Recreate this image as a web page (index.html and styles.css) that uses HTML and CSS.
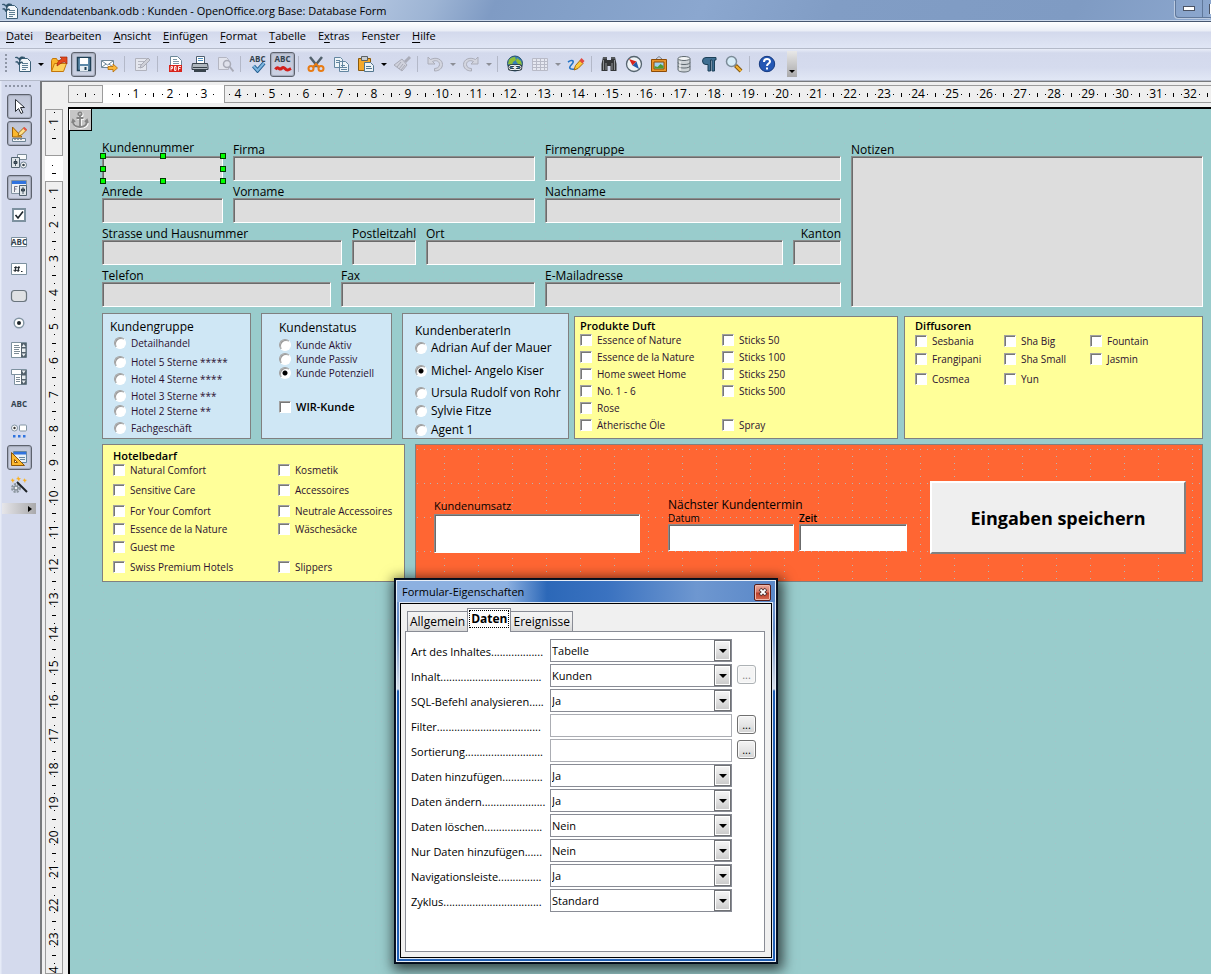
FILE: index.html
```html
<!DOCTYPE html>
<html lang="de">
<head>
<meta charset="utf-8">
<title>Kundendatenbank.odb : Kunden - OpenOffice.org Base: Database Form</title>
<link rel="stylesheet" href="styles.css">
</head>
<body>
<svg class="defs" aria-hidden="true">
  <defs>
    <symbol id="i-doc" viewBox="0 0 18 18"><path d="M5.500 3.500h8l3 3v10h-11z" fill="#f4f8fb" stroke="#3d6078"/><path d="M8 8.500h6M8 10.500h6M8 12.500h6M8 14.500h4" stroke="#5d7e93"/><path d="M1 2.500c2-1 3 0 4 1 1-2 4-2 6-1-2 0-4 1-5 3.500-1-2-3-3.500-5-3.500zM1.500 7c2-1 3 0 3.500 1 1-1.500 3-1.500 4-.5-2 0-3 1-4 2.500-1-2-2-3-3.500-3z" fill="#2d5168" stroke="#2d5168" stroke-width=".6"/></symbol>
    <symbol id="i-open" viewBox="0 0 18 18"><path d="M1.500 16V5.500l1-2h4l1 2h3V16z" fill="#f9b52c" stroke="#c4760a"/><path d="M1.500 16.500l3-8h12l-3 8z" fill="#fdd25c" stroke="#c4760a"/><path d="M7 11c0-4 2-6 5-7l-2-2h7v7l-2-2c-3 0-5 2-8 4z" fill="#e3481c" stroke="#a02a08" stroke-width=".7"/></symbol>
    <symbol id="i-save" viewBox="0 0 18 18"><path d="M2.500 2.500h13v13h-13z" fill="#5b88a8" stroke="#1f4056" stroke-width="1.500"/><path d="M5 3h8v6H5z" fill="#fff"/><path d="M5 11h8v5H5z" fill="#e6edf2"/><path d="M9.500 12h2v3h-2z" fill="#1f4056"/></symbol>
    <symbol id="i-mail" viewBox="0 0 18 18"><path d="M1.500 5.500h12v7h-12z" fill="#fff" stroke="#6f8797"/><path d="M2 6l5.500 4L13 6M2 12l4-3M13 12L9 9" fill="none" stroke="#6f8797"/><path d="M8 11.500h5V9l4.500 4-4.500 4v-2.500H8z" fill="#fcb738" stroke="#b36a05" stroke-width=".8"/></symbol>
    <symbol id="i-edit" viewBox="0 0 18 18"><path d="M2.500 3.500h11v12h-11z" fill="#e4e6ee" stroke="#b0b2bd"/><path d="M5 6.500h6M5 9.500h4M5 12.500h3" stroke="#b4b6c0"/><path d="M7 13l1-3 7-7 2 2-7 7z" fill="#cfd0d8" stroke="#a9abb6"/></symbol>
    <symbol id="i-pdf" viewBox="0 0 18 18"><path d="M4.500 1.500h7l4 4v10h-11z" fill="#fff" stroke="#6c8798"/><path d="M7 4.500h4M7 6.500h6M7 8.500h6" stroke="#7c96a7"/><path d="M3 10h13v7H3z" fill="#d8241c"/><path d="M5 15.500v-4h1.500v2H5M8.500 11.500v4h1.500v-4zM12.500 15.500v-4H15M12.500 13.500h2" fill="none" stroke="#fff" stroke-width=".9"/></symbol>
    <symbol id="i-print" viewBox="0 0 18 18"><path d="M5.500 1.500h8v7h-8z" fill="#fff" stroke="#506070"/><path d="M7 3.500h5M7 5.500h5" stroke="#4d8fc0"/><path d="M1.500 8.500h15l.5 3v3h-16v-3z" fill="#aeb7be" stroke="#38434c"/><path d="M2 12.500h14" stroke="#38434c"/><path d="M3 16h12" stroke="#38434c" stroke-width="2"/></symbol>
    <symbol id="i-preview" viewBox="0 0 18 18"><path d="M2.500 2.500h8l2 2v10h-10z" fill="#e2e4ed" stroke="#b4b6c2"/><circle cx="11" cy="9" r="3.500" fill="#dfe1eb" stroke="#a8aab6" stroke-width="1.500"/><path d="M13.500 11.500l4 5" stroke="#a8aab6" stroke-width="2"/></symbol>
    <symbol id="i-check" viewBox="0 0 18 18"><path d="M4.500 11l4 4.500L15 8" fill="none" stroke="#245f92" stroke-width="4"/><path d="M4.500 11l4 4.500L15 8" fill="none" stroke="#7db6e0" stroke-width="2"/></symbol>
    <symbol id="i-wave" viewBox="0 0 18 18"><path d="M1.500 14.500c2-4 3.500 0 5-.5s2.500-3 4.500-.5 3 1.500 6 0" fill="none" stroke="#d31f1a" stroke-width="3"/></symbol>
    <symbol id="i-cut" viewBox="0 0 18 18"><path d="M3 2l8 10M15 2L7 12" stroke="#52616c" stroke-width="2.500"/><circle cx="4" cy="13.500" r="2.500" fill="none" stroke="#e87b13" stroke-width="2"/><circle cx="14" cy="13.500" r="2.500" fill="none" stroke="#e87b13" stroke-width="2"/><path d="M6 12l3-3 3 3" fill="none" stroke="#e87b13" stroke-width="2"/></symbol>
    <symbol id="i-copy" viewBox="0 0 18 18"><path d="M2.500 2.500h6l2 2v8h-8zM7.500 6.500h6l3 3v7h-9z" fill="#eef4f8" stroke="#6386a0"/><path d="M4 5.500h4M4 7.500h3M9 10.500h4M9 12.500h6M9 14.500h6" stroke="#6386a0"/></symbol>
    <symbol id="i-paste" viewBox="0 0 18 18"><path d="M1.500 3.500h12v12h-12z" fill="#f5a92c" stroke="#8a5a0c"/><path d="M4.500 1.500h6v4h-6z" fill="#c7ccd0" stroke="#5b6166"/><path d="M7.500 7.500h6l3 3v6h-9z" fill="#eef4f8" stroke="#52768f"/><path d="M9 11.500h5M9 13.500h6" stroke="#52768f"/></symbol>
    <symbol id="i-brush" viewBox="0 0 18 18"><path d="M17 2l-5 5" stroke="#aaacb8" stroke-width="3"/><path d="M9 4l5 6-5 6-8-6z" fill="#cfd1dc" stroke="#a9abb7"/><path d="M8 7l-4 5M10 9l-4 5M12 10l-4 5" stroke="#a9abb7"/></symbol>
    <symbol id="i-undo" viewBox="0 0 18 18"><path d="M2 2v7h7L6.500 6.500c4-2 7 0 7 3s-3 4-5 4v2.500c5 0 8-3 8-6.500 0-5-6-8-12-5z" fill="#d3d5df" stroke="#abadb9"/></symbol>
    <symbol id="i-redo" viewBox="0 0 18 18"><path d="M16 2v7H9l2.500-2.500c-4-2-7 0-7 3s3 4 5 4V16c-5 0-8-3-8-6.500 0-5 6-8 12-5z" fill="#d3d5df" stroke="#abadb9"/></symbol>
    <symbol id="i-globe" viewBox="0 0 18 18"><circle cx="9" cy="8.500" r="7.500" fill="#367fb7" stroke="#28506c"/><path d="M3 5c2-3 5-3 6-3l1 3-3 2-1 3-4-1zM11 3l4 3 1 4-4-1-2-3z" fill="#8fbe36"/><path d="M5 10.500h3a2 2 0 010 4H5a2 2 0 010-4zM10 10.500h3a2 2 0 010 4h-3a2 2 0 010-4zM6.500 12.500h5" fill="none" stroke="#27333a" stroke-width="2.600"/><path d="M5 10.500h3a2 2 0 010 4H5a2 2 0 010-4zM10 10.500h3a2 2 0 010 4h-3a2 2 0 010-4zM6.500 12.500h5" fill="none" stroke="#eef2f4"/></symbol>
    <symbol id="i-table" viewBox="0 0 18 18"><path d="M1.500 3.500h15v12h-15zM1.500 6.500h15M1.500 9.500h15M1.500 12.500h15M5.500 3.500v12M9.500 3.500v12M13.500 3.500v12" fill="#e6e8f1" stroke="#b8bac7"/></symbol>
    <symbol id="i-draw" viewBox="0 0 18 18"><path d="M1 7c4-3 7-1 4 2s-4 6 3 5" fill="none" stroke="#2472c4" stroke-width="1.600"/><path d="M7 15l1.500-4.500 4.500-5 3 3-5 5z" fill="#fbc93a" stroke="#a86a0b"/><path d="M12.500 5.500l2-2.500 3 3-2 2.500z" fill="#e24a42"/></symbol>
    <symbol id="i-find" viewBox="0 0 18 18"><path d="M3 2h4v3h4V2h4l1.500 7v7h-6v-5h-3v5h-6V9z" fill="#343638"/><path d="M3.500 5v10M6 8v7M12 8v7M14.500 5v10" stroke="#8d9194"/><path d="M3 3h4M11 3h4" stroke="#777b7e"/></symbol>
    <symbol id="i-compass" viewBox="0 0 18 18"><circle cx="9" cy="9" r="7.500" fill="#edf2f5" stroke="#55646f" stroke-width="1.300"/><path d="M4 4l7.500 2.500-4 4z" fill="#d8241c"/><path d="M14 14l-2.500-7.500-4 4z" fill="#255ba8"/></symbol>
    <symbol id="i-gallery" viewBox="0 0 18 18"><path d="M6 4l3-2.500L12 4" fill="none" stroke="#77838c"/><path d="M1.500 4.500h15v12h-15z" fill="#e9962b" stroke="#8e4c06"/><path d="M4 7h10v7H4z" fill="#9fd0ee" stroke="#8e4c06"/><path d="M4.500 13.500V11l3 1 3-3 3 2v2.500z" fill="#4e9b32"/></symbol>
    <symbol id="i-db" viewBox="0 0 18 18"><path d="M3 4v11c0 1 3 2 6 2s6-1 6-2V4" fill="#cdd3d6" stroke="#5e686e"/><ellipse cx="9" cy="3.500" rx="6" ry="2" fill="#f3f5f6" stroke="#5e686e"/><path d="M3 7.500c0 2.700 12 2.700 12 0M3 11c0 2.700 12 2.700 12 0" fill="none" stroke="#5e686e"/><path d="M5 6.500v9" stroke="#fff"/></symbol>
    <symbol id="i-para" viewBox="0 0 18 18"><path d="M16 2.500H6a3.500 3.500 0 000 7h2V16h2.500V5H12v11h2.500V5H16z" fill="#3f6f92" stroke="#1d4058"/></symbol>
    <symbol id="i-zoom" viewBox="0 0 18 18"><circle cx="6.500" cy="6.500" r="5" fill="#d6ecf8" stroke="#7b8b97" stroke-width="1.500"/><path d="M10.500 10.500l5.500 5.500" stroke="#7e540c" stroke-width="4"/><path d="M11 11l5 5" stroke="#f2b02f" stroke-width="2.300"/></symbol>
    <symbol id="i-help" viewBox="0 0 18 18"><circle cx="9" cy="9" r="7.700" fill="#2458b4" stroke="#163a80"/><path d="M6 7c0-4 6-4 6-.5 0 2-3 2-3 4.500" fill="none" stroke="#fff" stroke-width="2"/><path d="M8 12.500h2v2H8z" fill="#fff"/></symbol>
    <symbol id="i-cursor" viewBox="0 0 18 18"><path d="M5.500 1.500v12l3-3 2.500 5 2-1-2.500-5h4z" fill="#fff" stroke="#2a2f36"/></symbol>
    <symbol id="i-design" viewBox="0 0 18 18"><path d="M2.500 2v10H12z" fill="#fbb82e" stroke="#9b6008"/><path d="M2.500 13.500h13v3h-13z" fill="#f1f4f6" stroke="#6f8494"/><path d="M5 14v1M8 14v1M11 14v1" stroke="#445"/><path d="M8 11l1-3.500 5-5 2.500 2.500-5 5z" fill="#fde08a" stroke="#a36b10"/><path d="M13 3.500l1.500-1.500 2.500 2.500-1.500 1.500z" fill="#e5534b"/></symbol>
    <symbol id="i-ctrl" viewBox="0 0 18 18"><path d="M7.500 2.500h9v5h-9z" fill="#f8fafb" stroke="#7b8c98"/><path d="M1.500 5.500h8v10h-8z" fill="#dfe5e9" stroke="#51626f"/><path d="M5.500 7v7" stroke="#51626f"/><path d="M4 9.500h3v2H4z" fill="#51626f" stroke="#33414c"/><circle cx="13.500" cy="13" r="3" fill="#fff" stroke="#6d8190"/><circle cx="13.500" cy="13" r="1.300" fill="#33414c"/></symbol>
    <symbol id="i-form" viewBox="0 0 18 18"><path d="M1.500 1.500h15v13h-15z" fill="#eef2f5" stroke="#8495a3"/><path d="M2 2h14v3H2z" fill="#2f73df"/><path d="M4.500 13V7.500h3M4.500 10h2" fill="none" stroke="#778"/><path d="M9.500 6.500h7v10h-7z" fill="#dfe5e9" stroke="#51626f"/><path d="M13 8v7" stroke="#51626f"/><path d="M11.500 10h3v2h-3z" fill="#51626f" stroke="#33414c"/></symbol>
    <symbol id="i-cb" viewBox="0 0 18 18"><path d="M3 3h12v12H3z" fill="#fff" stroke="#7d919f" stroke-width="2"/><path d="M5.500 9l2.500 3 5-6.500" fill="none" stroke="#1d252b" stroke-width="1.600"/></symbol>
    <symbol id="i-frame" viewBox="0 0 18 18"><path d="M1.500 4.500h15v9h-15z" fill="#fff" stroke="#7d919f"/></symbol>
    <symbol id="i-hash" viewBox="0 0 18 18"><path d="M1.500 3.500h15v11h-15z" fill="#fff" stroke="#7d919f"/><path d="M6 6l-1 6M9 6l-1 6M4 7.700h6M3.500 10.300h6M11 11.500h1.500" stroke="#1d252b"/></symbol>
    <symbol id="i-btn" viewBox="0 0 18 18"><rect x="1.500" y="3.500" width="15" height="11" rx="3" fill="#dfe1e4" stroke="#69747d" stroke-width="1.200"/></symbol>
    <symbol id="i-radio" viewBox="0 0 18 18"><circle cx="9" cy="9" r="4.800" fill="#fff" stroke="#8395a3" stroke-width="1.400"/><circle cx="9" cy="9" r="2" fill="#1d252b"/></symbol>
    <symbol id="i-list" viewBox="0 0 18 18"><path d="M1.500 1.500h15v15h-15z" fill="#fff" stroke="#7d919f"/><path d="M4 4.500h5M4 6.500h6M4 8.500h5M4 10.500h6M4 12.500h5" stroke="#7d8c97"/><path d="M11 2h5.500v14.500H11z" fill="#53616c"/><path d="M13.700 3l2 3h-4zM13.700 15.500l2-3h-4zM12 7.500h3.500v3.500H12z" fill="#e9eef1"/></symbol>
    <symbol id="i-combo" viewBox="0 0 18 18"><path d="M1.500 1.500h15v5h-15zM4.500 6.500h12v10h-12z" fill="#fff" stroke="#7d919f"/><path d="M6 9.500h4M6 11.500h4M6 13.500h4" stroke="#7d8c97"/><path d="M11 2h5.500v14.500H11z" fill="#53616c"/><path d="M13.700 5.500l2-3h-4zM13.700 15.500l2-3h-4zM12 7.500h3.500v3.500H12z" fill="#e9eef1"/></symbol>
    <symbol id="i-more" viewBox="0 0 18 18"><circle cx="4.500" cy="6" r="3" fill="#fff" stroke="#8395a3"/><circle cx="4.500" cy="6" r="1.200" fill="#333"/><rect x="9.500" y="3" width="7" height="6" rx="1" fill="#fff" stroke="#8395a3"/><path d="M3 13h2.500v2.500H3zM8 13h2.500v2.500H8zM13 13h2.500v2.500H13z" fill="#2f73df"/></symbol>
    <symbol id="i-tri" viewBox="0 0 18 18"><path d="M3.500 2.500h13v11h-13z" fill="#e8f0f6" stroke="#6587a1"/><path d="M4 3h12v2.500H4z" fill="#2f73df"/><path d="M9 8.500h6M10 10.500h5" stroke="#6587a1"/><path d="M1.500 3.500v13h13z" fill="#fbb82e" stroke="#8e5707"/><path d="M4.500 10.500v3h3z" fill="#fff" stroke="#8e5707"/></symbol>
    <symbol id="i-wizard" viewBox="0 0 18 18"><circle cx="6" cy="12" r="3.700" fill="none" stroke="#8d979f" stroke-width="2.600" stroke-dasharray="2 1"/><circle cx="6" cy="12" r="2" fill="#eef0f2" stroke="#69747c"/><path d="M7 6l10 10" stroke="#1e2226" stroke-width="2"/><path d="M2 2l1 1.500L5 4 3.500 5 3 7 2 5 .5 4 2 3.500zM8 0l1 2 2 .5L9.500 3.500 9 5.500 8 3.500 6 3l1.500-1zM14 2l1 1.500 2 .5-1.500 1L15 7l-1-2-1.500-1 1.500-.5z" fill="#fbb01e"/></symbol>
    <symbol id="i-anchor" viewBox="0 0 18 18"><g fill="none" stroke="#fff" stroke-width="2" transform="translate(.8 .8)"><circle cx="9" cy="3" r="1.700"/><path d="M9 5v11M5.500 7h7M2 10c0 4 3 6 7 6s7-2 7-6"/></g><g fill="none" stroke="#848484" stroke-width="1.800"><circle cx="9" cy="3" r="1.700"/><path d="M9 5v11M5.500 7h7M2 10c0 4 3 6 7 6s7-2 7-6M1 12l1-3 2 2M17 12l-1-3-2 2"/></g></symbol>
  </defs>
</svg>

<div class="window">
  <header class="titlebar">
    <svg class="icon"><use href="#i-doc"/></svg>
    <h1>Kundendatenbank.odb : Kunden - OpenOffice.org Base: Database Form</h1>
    <div class="caption"><button type="button" aria-label="Minimieren"><i class="bar"></i></button><button type="button" class="cut-off" aria-label="Maximieren"><i class="box"></i></button></div>
  </header>

  <nav class="menubar">
    <button type="button"><u>D</u>atei</button><button type="button"><u>B</u>earbeiten</button><button type="button"><u>A</u>nsicht</button><button type="button"><u>E</u>infügen</button><button type="button"><u>F</u>ormat</button><button type="button"><u>T</u>abelle</button><button type="button">E<u>x</u>tras</button><button type="button">Fen<u>s</u>ter</button><button type="button"><u>H</u>ilfe</button>
  </nav>

  <div class="toolbar" role="toolbar" aria-label="Standard">
    <span class="grip"></span>
    <button type="button" class="tool" aria-label="Neu"><svg class="icon"><use href="#i-doc"/></svg></button>
    <button type="button" class="drop" aria-label="Neu Auswahl"></button>
    <button type="button" class="tool" aria-label="Öffnen"><svg class="icon"><use href="#i-open"/></svg></button>
    <button type="button" class="tool on" aria-label="Speichern"><svg class="icon"><use href="#i-save"/></svg></button>
    <button type="button" class="tool" aria-label="E-Mail"><svg class="icon"><use href="#i-mail"/></svg></button>
    <span class="sep"></span>
    <button type="button" class="tool" aria-label="Bearbeiten"><svg class="icon"><use href="#i-edit"/></svg></button>
    <span class="sep"></span>
    <button type="button" class="tool" aria-label="PDF"><svg class="icon"><use href="#i-pdf"/></svg></button>
    <button type="button" class="tool" aria-label="Drucken"><svg class="icon"><use href="#i-print"/></svg></button>
    <button type="button" class="tool" aria-label="Seitenansicht"><svg class="icon"><use href="#i-preview"/></svg></button>
    <span class="sep"></span>
    <button type="button" class="tool abc"><svg class="icon"><use href="#i-check"/></svg><span>ABC</span></button>
    <button type="button" class="tool on abc"><svg class="icon"><use href="#i-wave"/></svg><span>ABC</span></button>
    <span class="sep"></span>
    <button type="button" class="tool" aria-label="Ausschneiden"><svg class="icon"><use href="#i-cut"/></svg></button>
    <button type="button" class="tool" aria-label="Kopieren"><svg class="icon"><use href="#i-copy"/></svg></button>
    <button type="button" class="tool" aria-label="Einfügen"><svg class="icon"><use href="#i-paste"/></svg></button>
    <button type="button" class="drop" aria-label="Einfügen Auswahl"></button>
    <button type="button" class="tool" aria-label="Format übertragen"><svg class="icon"><use href="#i-brush"/></svg></button>
    <span class="sep"></span>
    <button type="button" class="tool" aria-label="Rückgängig"><svg class="icon"><use href="#i-undo"/></svg></button>
    <button type="button" class="drop dim" aria-label="Rückgängig Auswahl"></button>
    <button type="button" class="tool" aria-label="Wiederherstellen"><svg class="icon"><use href="#i-redo"/></svg></button>
    <button type="button" class="drop dim" aria-label="Wiederherstellen Auswahl"></button>
    <span class="sep"></span>
    <button type="button" class="tool" aria-label="Hyperlink"><svg class="icon"><use href="#i-globe"/></svg></button>
    <button type="button" class="tool" aria-label="Tabelle"><svg class="icon"><use href="#i-table"/></svg></button>
    <button type="button" class="drop dim" aria-label="Tabelle Auswahl"></button>
    <button type="button" class="tool" aria-label="Zeichnen"><svg class="icon"><use href="#i-draw"/></svg></button>
    <span class="sep"></span>
    <button type="button" class="tool" aria-label="Suchen"><svg class="icon"><use href="#i-find"/></svg></button>
    <button type="button" class="tool" aria-label="Navigator"><svg class="icon"><use href="#i-compass"/></svg></button>
    <button type="button" class="tool" aria-label="Gallery"><svg class="icon"><use href="#i-gallery"/></svg></button>
    <button type="button" class="tool" aria-label="Datenquellen"><svg class="icon"><use href="#i-db"/></svg></button>
    <button type="button" class="tool" aria-label="Steuerzeichen"><svg class="icon"><use href="#i-para"/></svg></button>
    <button type="button" class="tool" aria-label="Maßstab"><svg class="icon"><use href="#i-zoom"/></svg></button>
    <span class="sep"></span>
    <button type="button" class="tool" aria-label="Hilfe"><svg class="icon"><use href="#i-help"/></svg></button>
    <button type="button" class="overflow" aria-label="Weitere"></button>
  </div>

  <div class="workspace">
    <aside class="sidebar">
      <span class="grip-h"></span>
      <button type="button" class="tool on" aria-label="Auswahl"><svg class="icon"><use href="#i-cursor"/></svg></button>
      <button type="button" class="tool on" aria-label="Entwurfsmodus"><svg class="icon"><use href="#i-design"/></svg></button>
      <button type="button" class="tool" aria-label="Kontrollfeld"><svg class="icon"><use href="#i-ctrl"/></svg></button>
      <button type="button" class="tool on" aria-label="Formular"><svg class="icon"><use href="#i-form"/></svg></button>
      <button type="button" class="tool" aria-label="Markierfeld"><svg class="icon"><use href="#i-cb"/></svg></button>
      <button type="button" class="tool abc mid"><svg class="icon"><use href="#i-frame"/></svg><span>ABC</span></button>
      <button type="button" class="tool" aria-label="Formatiertes Feld"><svg class="icon"><use href="#i-hash"/></svg></button>
      <button type="button" class="tool" aria-label="Schaltfläche"><svg class="icon"><use href="#i-btn"/></svg></button>
      <button type="button" class="tool" aria-label="Optionsfeld"><svg class="icon"><use href="#i-radio"/></svg></button>
      <button type="button" class="tool" aria-label="Listenfeld"><svg class="icon"><use href="#i-list"/></svg></button>
      <button type="button" class="tool" aria-label="Kombinationsfeld"><svg class="icon"><use href="#i-combo"/></svg></button>
      <button type="button" class="tool abc mid"><span>ABC</span></button>
      <button type="button" class="tool" aria-label="Weitere Steuerelemente"><svg class="icon"><use href="#i-more"/></svg></button>
      <button type="button" class="tool on" aria-label="Formular-Entwurf"><svg class="icon"><use href="#i-tri"/></svg></button>
      <button type="button" class="tool" aria-label="Assistenten"><svg class="icon"><use href="#i-wizard"/></svg></button>
      <button type="button" class="overflow-h" aria-label="Weitere"></button>
    </aside>

    <div class="editor">
      <div class="ruler-x">
        <div class="seg pre"><span></span></div>
        <div class="seg page"><span></span><span>1</span><span>2</span><span>3</span></div>
        <div class="seg rest"><span>4</span><span>5</span><span>6</span><span>7</span><span>8</span><span>9</span><span>10</span><span>11</span><span>12</span><span>13</span><span>14</span><span>15</span><span>16</span><span>17</span><span>18</span><span>19</span><span>20</span><span>21</span><span>22</span><span>23</span><span>24</span><span>25</span><span>26</span><span>27</span><span>28</span><span>29</span><span>30</span><span>31</span><span>32</span><span></span></div>
      </div>
      <div class="ruler-y">
        <div class="seg pre"><span>1</span><span></span></div>
        <div class="seg page"><span></span></div>
        <div class="seg rest"><span>1</span><span>2</span><span>3</span><span>4</span><span>5</span><span>6</span><span>7</span><span>8</span><span>9</span><span>10</span><span>11</span><span>12</span><span>13</span><span>14</span><span>15</span><span>16</span><span>17</span><span>18</span><span>19</span><span>20</span><span>21</span><span>22</span><span>23</span><span>24</span></div>
      </div>

      <main class="canvas">
        <div class="anchor"><svg class="icon"><use href="#i-anchor"/></svg></div>
        <form class="form">
          <section class="fields">
            <div class="left">
              <div class="row r1">
                <div class="field selected"><label for="nr">Kundennummer</label><div class="frame"><input id="nr"><i class="h h1"></i><i class="h h2"></i><i class="h h3"></i><i class="h h4"></i><i class="h h5"></i><i class="h h6"></i><i class="h h7"></i><i class="h h8"></i></div></div>
                <div class="field"><label for="firma">Firma</label><input id="firma"></div>
                <div class="field"><label for="gruppe">Firmengruppe</label><input id="gruppe"></div>
              </div>
              <div class="row r1">
                <div class="field"><label for="anrede">Anrede</label><input id="anrede"></div>
                <div class="field"><label for="vorname">Vorname</label><input id="vorname"></div>
                <div class="field"><label for="nachname">Nachname</label><input id="nachname"></div>
              </div>
              <div class="row r3">
                <div class="field"><label for="strasse">Strasse und Hausnummer</label><input id="strasse"></div>
                <div class="field"><label for="plz">Postleitzahl</label><input id="plz"></div>
                <div class="field"><label for="ort">Ort</label><input id="ort"></div>
                <div class="field end"><label for="kanton">Kanton</label><input id="kanton"></div>
              </div>
              <div class="row r4">
                <div class="field"><label for="tel">Telefon</label><input id="tel"></div>
                <div class="field"><label for="fax">Fax</label><input id="fax"></div>
                <div class="field"><label for="mail">E-Mailadresse</label><input id="mail"></div>
              </div>
            </div>
            <div class="field notes"><label for="notizen">Notizen</label><textarea id="notizen"></textarea></div>
          </section>

          <section class="panels">
            <div class="blues">
              <fieldset class="panel blue gruppe"><h2>Kundengruppe</h2>
                <div class="opts">
                  <label><input type="radio" name="g">Detailhandel</label><label><input type="radio" name="g">Hotel 5 Sterne *****</label><label><input type="radio" name="g">Hotel 4 Sterne ****</label><label><input type="radio" name="g">Hotel 3 Sterne ***</label><label><input type="radio" name="g">Hotel 2 Sterne **</label><label><input type="radio" name="g">Fachgeschäft</label>
                </div>
              </fieldset>
              <fieldset class="panel blue status"><h2>Kundenstatus</h2>
                <div class="opts">
                  <label><input type="radio" name="s">Kunde Aktiv</label><label><input type="radio" name="s">Kunde Passiv</label><label><input type="radio" name="s" checked>Kunde Potenziell</label><label class="strong"><input type="checkbox">WIR-Kunde</label>
                </div>
              </fieldset>
              <fieldset class="panel blue berater"><h2>KundenberaterIn</h2>
                <div class="opts">
                  <label><input type="radio" name="b">Adrian Auf der Mauer</label><label><input type="radio" name="b" checked>Michel- Angelo Kiser</label><label><input type="radio" name="b">Ursula Rudolf von Rohr</label><label><input type="radio" name="b">Sylvie Fitze</label><label><input type="radio" name="b">Agent 1</label>
                </div>
              </fieldset>
            </div>
            <div class="yellows">
              <fieldset class="panel yellow duft"><h2>Produkte Duft</h2>
                <div class="opts">
                  <label><input type="checkbox">Essence of Nature</label><label><input type="checkbox">Sticks 50</label>
                  <label><input type="checkbox">Essence de la Nature</label><label><input type="checkbox">Sticks 100</label>
                  <label><input type="checkbox">Home sweet Home</label><label><input type="checkbox">Sticks 250</label>
                  <label><input type="checkbox">No. 1 - 6</label><label><input type="checkbox">Sticks 500</label>
                  <label class="first"><input type="checkbox">Rose</label>
                  <label class="first"><input type="checkbox">Ätherische Öle</label><label><input type="checkbox">Spray</label>
                </div>
              </fieldset>
              <fieldset class="panel yellow diff"><h2>Diffusoren</h2>
                <div class="opts">
                  <label><input type="checkbox">Sesbania</label><label><input type="checkbox">Sha Big</label><label><input type="checkbox">Fountain</label>
                  <label><input type="checkbox">Frangipani</label><label><input type="checkbox">Sha Small</label><label><input type="checkbox">Jasmin</label>
                  <label><input type="checkbox">Cosmea</label><label><input type="checkbox">Yun</label>
                </div>
              </fieldset>
            </div>
          </section>

          <section class="bottom">
            <fieldset class="panel yellow hotel"><h2>Hotelbedarf</h2>
              <div class="opts">
                <label><input type="checkbox">Natural Comfort</label><label><input type="checkbox">Kosmetik</label>
                <label><input type="checkbox">Sensitive Care</label><label><input type="checkbox">Accessoires</label>
                <label><input type="checkbox">For Your Comfort</label><label><input type="checkbox">Neutrale Accessoires</label>
                <label><input type="checkbox">Essence de la Nature</label><label><input type="checkbox">Wäschesäcke</label>
                <label class="first"><input type="checkbox">Guest me</label>
                <label class="first"><input type="checkbox">Swiss Premium Hotels</label><label><input type="checkbox">Slippers</label>
              </div>
            </fieldset>
            <div class="panel orange">
              <div class="field umsatz"><label for="umsatz">Kundenumsatz</label><input id="umsatz"></div>
              <div class="termin">
                <h3>Nächster Kundentermin</h3>
                <div class="pair">
                  <div class="field small"><label for="datum">Datum</label><input id="datum"></div>
                  <div class="field small"><label for="zeit" class="strong">Zeit</label><input id="zeit"></div>
                </div>
              </div>
              <button type="button" class="save">Eingaben speichern</button>
            </div>
          </section>
        </form>
      </main>
    </div>
  </div>
</div>

<div class="dialog" role="dialog" aria-labelledby="dlg-title">
  <div class="dlg-title"><h2 id="dlg-title">Formular-Eigenschaften</h2><button type="button" aria-label="Schließen"><svg viewBox="0 0 10 10"><path d="M2 2l6 6M8 2L2 8" stroke="#4a3030" stroke-width="3.600"/><path d="M2.500 2.500l5 5M7.500 2.500l-5 5" stroke="#fff" stroke-width="1.900"/></svg></button></div>
  <div class="dlg-body">
    <div class="tabs" role="tablist"><button type="button" role="tab">Allgemein</button><button type="button" role="tab" aria-selected="true" class="active"><span>Daten</span></button><button type="button" role="tab">Ereignisse</button></div>
    <div class="pane">
      <div class="prop"><label for="p1">Art des Inhaltes..................</label><div class="combo"><select id="p1"><option>Tabelle</option></select><i></i></div></div>
      <div class="prop"><label for="p2">Inhalt...................................</label><div class="combo"><select id="p2"><option>Kunden</option></select><i></i></div><button type="button" disabled>...</button></div>
      <div class="prop"><label for="p3">SQL-Befehl analysieren.....</label><div class="combo"><select id="p3"><option>Ja</option></select><i></i></div></div>
      <div class="prop"><label for="p4">Filter....................................</label><input id="p4"><button type="button">...</button></div>
      <div class="prop"><label for="p5">Sortierung...........................</label><input id="p5"><button type="button">...</button></div>
      <div class="prop"><label for="p6">Daten hinzufügen..............</label><div class="combo"><select id="p6"><option>Ja</option></select><i></i></div></div>
      <div class="prop"><label for="p7">Daten ändern......................</label><div class="combo"><select id="p7"><option>Ja</option></select><i></i></div></div>
      <div class="prop"><label for="p8">Daten löschen....................</label><div class="combo"><select id="p8"><option>Nein</option></select><i></i></div></div>
      <div class="prop"><label for="p9">Nur Daten hinzufügen......</label><div class="combo"><select id="p9"><option>Nein</option></select><i></i></div></div>
      <div class="prop"><label for="p10">Navigationsleiste...............</label><div class="combo"><select id="p10"><option>Ja</option></select><i></i></div></div>
      <div class="prop"><label for="p11">Zyklus..................................</label><div class="combo"><select id="p11"><option>Standard</option></select><i></i></div></div>
    </div>
  </div>
</div>
</body>
</html>
```
FILE: styles.css
```css
* { box-sizing: border-box; }
html, body { margin: 0; height: 100%; overflow: hidden; }
body { font-family: "Open Sans", "Noto Sans", sans-serif; font-size: 11px; color: #000; position: relative; }
button, input, select, textarea { font: inherit; color: inherit; margin: 0; padding: 0; }
button { background: none; border: 0; }
h1, h2, h3 { margin: 0; font-size: inherit; font-weight: 400; }
.defs { display: none; }
.icon { width: 18px; height: 18px; display: block; }

.window { display: flex; flex-direction: column; height: 100vh; background: #d4daed; }

.titlebar { display: flex; align-items: center; gap: 2px; height: 22px; padding-left: 1px; flex: none; border-bottom: 1px solid #46566f; box-shadow: inset 0 -1px #cbd8ea; background: linear-gradient(115deg, #b5c8e2 0, #bccde5 300px, #9db4d4 395px, #7f9bc4 450px, #83a0c8 520px, #8ba7cf 640px, #819dc5 760px, #7f9bc3 980px, #8ba6cd 1100px, #a3badb 100%); }
.titlebar h1 { flex: 1; font-size: 11px; line-height: 20px; white-space: nowrap; }
.caption { display: flex; align-self: flex-start; height: 18px; border: 1px solid #60789b; border-width: 0 0 1px 1px; border-radius: 0 0 0 4px; box-shadow: -1px 1px #bccbe1; overflow: hidden; }
.caption button { width: 27px; display: flex; align-items: center; justify-content: center; border-right: 1px solid #60789b; }
.caption .cut-off { width: 8px; border: 0; justify-content: flex-end; }
.caption .bar { width: 12px; height: 5px; border: 1px solid #4b5364; background: #fff; }
.caption .box { width: 2px; height: 10px; border-left: 1px solid #4b5364; background: #fff; }

.menubar { display: flex; gap: 12px; height: 27px; flex: none; padding: 2px 0 0 6px; align-items: center; background: linear-gradient(#fff 0, #e9edf6 9px, #d3d9ec 10px, #e0e6f5 26px); border-bottom: 1px solid #b4bac9; }
.menubar button { line-height: 18px; }
.menubar u { text-underline-offset: 2px; }

.toolbar { display: flex; align-items: center; height: 31px; flex: none; padding: 0 0 1px 4px; background: linear-gradient(#e9edf8, #d3d9ec 4px, #d5dbee 60%, #e1e7f5); }
.grip { width: 6px; height: 20px; background: linear-gradient(#8f96a6 50%, transparent 50%) 1px 0 / 2px 4px repeat-y; }
.tool { width: 25px; height: 25px; flex: none; display: grid; place-items: center; border: 1px solid transparent; border-radius: 3px; }
.tool.on { border-color: #5d626d; background: linear-gradient(#bfc5d6, #ccd2e4); box-shadow: inset 0 0 1px 1px #a2a8b8; }
.tool.abc > * { grid-area: 1 / 1; }
.tool.abc span { font-size: 8px; font-weight: 700; line-height: 8px; color: #33424f; align-self: start; padding-top: 2px; }
.tool.abc.mid span { align-self: center; padding: 0; }
.sep { width: 8px; height: 16px; background: linear-gradient(#b3b8c8, #b3b8c8) 3px 0 / 1px 100% no-repeat; }
.drop { width: 11px; height: 25px; display: grid; place-items: center; }
.drop::after { content: ""; border: 3px solid transparent; border-top-color: #000; border-bottom: 0; }
.drop.dim::after { border-top-color: #8c8e96; }
.overflow { align-self: flex-end; width: 10px; height: 26px; margin: 0 0 2px 8px; display: grid; place-items: end center; padding-bottom: 4px; background: linear-gradient(#e8e8e8, #a9a9ab); }
.overflow::after { content: ""; border: 3px solid transparent; border-top-color: #000; border-bottom: 0; }

.workspace { flex: 1; display: flex; min-height: 0; border-top: 1px solid #b4bac9; }
.sidebar { width: 40px; flex: none; display: flex; flex-direction: column; align-items: center; gap: 2px; padding: 4px 2px 0 0; background: linear-gradient(90deg, #e6ebf7 1px, #d4daed 2px); }
.grip-h { width: 28px; height: 7px; background: linear-gradient(90deg, #8f96a6 50%, transparent 50%) 0 0 / 4px 2px repeat-x; }
.overflow-h { width: 34px; height: 11px; margin-top: 4px; background: linear-gradient(90deg, #e6e6ea, #a9a9ab); display: grid; place-items: center end; padding-right: 4px; }
.overflow-h::after { content: ""; border: 3px solid transparent; border-left: 4px solid #000; border-right: 0; }

.editor { flex: 1; min-width: 0; display: grid; grid-template: 27px minmax(0, 1fr) / 26px minmax(0, 1fr); background: #efefef; border-left: 2px solid #77797c; border-top: 1px solid #77797c; }
.ruler-x { grid-column: 2; display: flex; height: 18px; margin-top: 3px; font-size: 12px; overflow: hidden; }
.seg { display: flex; overflow: hidden; flex: none; }
.seg span { flex: none; display: block; text-align: center; }
.ruler-x .seg { height: 18px; }
.ruler-x span { width: 34px; line-height: 18px; background: linear-gradient(#000, #000) 0 8px / 1px 4px no-repeat, linear-gradient(#000, #000) 9px 9px / 1px 1px no-repeat, linear-gradient(#000, #000) 26px 9px / 1px 1px no-repeat; }
.ruler-x .pre, .ruler-x .rest, .ruler-y .pre, .ruler-y .rest { border: 1px solid #9b9b9b; }
.ruler-x .rest span, .ruler-x .pre span, .ruler-y .rest span { line-height: 16px; }
.ruler-x .pre { width: 35px; }
.ruler-x .pre span { background-position: 16px 7px, 8px 8px, 25px 8px; }
.ruler-x .page { width: 121px; background: #fff; }
.ruler-x .page span:first-child { width: 16px; background-position: 0 -9px, 9px 9px, 26px -9px; }
.ruler-x .rest { flex: 1 1 0; border-right: 0; }
.ruler-x .rest span { background-position: 0 7px, 8px 8px, 26px 8px; }
.ruler-x .rest span:first-child { margin-left: -4px; }
.ruler-y { grid-area: 2 / 1; display: flex; flex-direction: column; width: 18px; margin-left: 3px; font-size: 12px; overflow: hidden; }
.ruler-y .seg { flex-direction: column; width: 18px; }
.ruler-y span { height: 34px; width: 16px; writing-mode: vertical-rl; transform: rotate(180deg); line-height: 16px; background: linear-gradient(#000, #000) 6px 0 / 4px 1px no-repeat, linear-gradient(#000, #000) 7px 9px / 1px 1px no-repeat, linear-gradient(#000, #000) 7px 26px / 1px 1px no-repeat; }
.ruler-y .pre { height: 47px; justify-content: flex-end; }
.ruler-y .pre span:first-child { margin-bottom: -1px; }
.ruler-y .pre span:last-child { height: 17px; background: none; }
.ruler-y .page { height: 25px; background: #fff; }
.ruler-y .page span { transform: none; height: 34px; background-position: 7px 17px, 7px 9px, 8px 40px; }
.ruler-y .rest { flex: 1; padding-left: 0; }
.ruler-y .rest span:first-child { margin-top: -8px; }

.canvas { grid-area: 2 / 2; border: 2px solid #000; border-width: 2px 0 0 2px; margin-top: -2px; padding-right: 8px; position: relative; background: #99cccc url("data:image/svg+xml,%3Csvg xmlns='http://www.w3.org/2000/svg' width='34' height='34'%3E%3Cpath d='M33 0h1v1h-1zM5 0h1v1h-1zM12 0h1v1h-1zM19 0h1v1h-1zM26 0h1v1h-1zM33 7h1v1h-1zM33 14h1v1h-1zM33 20h1v1h-1zM33 27h1v1h-1z' fill='%23a3c5c9'/%3E%3C/svg%3E"); }
.anchor { position: absolute; left: -1px; top: 0; width: 23px; height: 22px; display: grid; place-items: center; background: #c6c6c6; border: 1px solid #000; border-width: 0 1px 1px 0; box-shadow: inset 1px 1px #fff; }

.form { display: flex; flex-direction: column; gap: 6px; padding: 30px 0 0 32px; }
.fields { display: grid; grid-template-columns: minmax(0, 739fr) minmax(0, 352fr); gap: 10px; }
.left { display: flex; flex-direction: column; }
.row { display: grid; column-gap: 10px; }
.r1 { grid-template-columns: minmax(0, 121fr) minmax(0, 302fr) minmax(0, 296fr); }
.r3 { grid-template-columns: minmax(0, 240fr) minmax(0, 64fr) minmax(0, 357fr) minmax(0, 48fr); }
.r4 { grid-template-columns: minmax(0, 229fr) minmax(0, 194fr) minmax(0, 296fr); }
.field { display: flex; flex-direction: column; min-width: 0; }
.field > label, .termin h3 { font-size: 12px; line-height: 22px; height: 17px; white-space: nowrap; }
.field.selected > label { line-height: 18px; }
.field.end > label { align-self: flex-end; }
.field input, .field textarea { width: 100%; min-width: 0; height: 25px; padding: 0 4px; border: 1px solid; border-color: #8b8b8b #fff #fff #8b8b8b; border-radius: 0; background: #ddd; box-shadow: inset 1px 1px #6b6b6b; outline: 0; display: block; resize: none; }
.field textarea { flex: 1; }
.frame { position: relative; }
.h { position: absolute; width: 6px; height: 6px; background: #0f0; border: 1px solid #003a00; translate: -50% -50%; }
.h1, .h4, .h6 { left: 1px; } .h2, .h7 { left: 50%; } .h3, .h5, .h8 { left: 100%; }
.h1, .h2, .h3 { top: 0; } .h4, .h5 { top: 50%; } .h6, .h7, .h8 { top: 100%; }

.panels { display: grid; grid-template-columns: minmax(0, 467fr) minmax(0, 629fr); gap: 5px; }
.blues { display: grid; grid-template-columns: minmax(0, 149fr) minmax(0, 131fr) minmax(0, 167fr); gap: 10px; }
.yellows { display: grid; grid-template-columns: minmax(0, 324fr) minmax(0, 299fr); gap: 6px; padding-top: 3px; }
.panel { margin: 0; min-width: 0; border: 1px solid #808080; padding: 0; }
.blue { background: #cfe7f5; min-height: 126px; }
.yellow { background: #ff9; }
.panel h2 { font-size: 12px; line-height: 16px; white-space: nowrap; }
.yellow h2 { font-size: 11px; font-weight: 600; }
.opts { display: grid; }
.opts label { display: flex; align-items: center; gap: 5px; height: 14px; font-size: 10px; line-height: 14px; white-space: nowrap; color: #2b1030; }
.opts .first { grid-column: 1; }
.opts .strong, .strong { color: #000; font-weight: 600; }
.opts .strong { font-size: 11px; }
.opts input { appearance: none; flex: none; width: 12px; height: 12px; background: #fff; border: 1px solid; border-color: #a0a0a0 #fff #fff #a0a0a0; box-shadow: inset 1px 1px #777; }
.opts input[type="radio"] { border-radius: 50%; box-shadow: inset 1px 1px #999; }
.opts input[type="radio"]:checked { background: radial-gradient(circle, #000 2px, #fff 3px); }
.gruppe { padding: 5px 0 0 7px; }
.gruppe .opts { grid-template-rows: 19px 17px 17px 15px 17px 14px; padding: 1px 0 0 4px; }
.status { padding: 6px 0 0 17px; }
.status .opts { grid-template-rows: 14px 14px 34px 14px; padding-top: 2px; }
.berater { padding: 9px 0 0 12px; }
.berater .opts { grid-template-rows: 23px 22px 18px 19px 10px; padding-top: 2px; }
.berater .opts label { font-size: 12px; gap: 4px; color: #000; }
.duft { padding: 1px 0 0 5px; }
.duft .opts { grid-template-columns: 142px 1fr; grid-template-rows: repeat(6, 17px); margin-top: -1px; }
.diff { padding: 1px 0 0 10px; }
.diff .opts { grid-template-columns: 31% 30% 1fr; grid-template-rows: 18px 20px 14px; }

.bottom { display: grid; grid-template-columns: minmax(0, 303fr) minmax(0, 788fr); gap: 10px; min-height: 138px; margin-top: -1px; }
.hotel { padding: 3px 0 0 10px; }
.hotel h2 { line-height: 16px; }
.hotel .opts { grid-template-columns: 165px 1fr; grid-template-rows: 20px 21px 18px 18px 20px 14px; margin-top: -1px; }
.orange { display: flex; align-items: flex-start; padding: 36px 16px 0 18px; background: #f63 url("data:image/svg+xml,%3Csvg xmlns='http://www.w3.org/2000/svg' width='34' height='34'%3E%3Cpath d='M0 0h1v1H0zM7 0h1v1H7zM14 0h1v1h-1zM20 0h1v1h-1zM27 0h1v1h-1zM0 7h1v1H0zM0 14h1v1H0zM0 20h1v1H0zM0 27h1v1H0z' fill='%23b8b4b4'/%3E%3C/svg%3E") 28px 4px; }
.orange .field input { background: #fff; }
.umsatz { flex: 206 1 0; margin: 16px 28px 0 0; }
.umsatz > label { font-size: 11px; line-height: 17px; }
.orange .umsatz input { height: 39px; }
.termin { flex: 239 1 0; min-width: 0; margin: 16px 23px 0 0; }
.termin h3 { line-height: 16px; height: 16px; }
.pair { display: grid; grid-template-columns: minmax(0, 126fr) minmax(0, 108fr); gap: 5px; }
.field.small > label { font-size: 10px; line-height: 11px; height: 11px; }
.field.small input { height: 27px; }
.save { flex: 252 1 0; min-width: 0; height: 73px; font-size: 18px; font-weight: 700; background: #efefef; border: 2px solid; border-color: #fff #808080 #808080 #fff; white-space: nowrap; }

.dialog { position: absolute; left: 394px; top: 578px; width: 384px; display: flex; flex-direction: column; padding: 0 5px 5px; border: 1px solid #030d1c; box-shadow: inset 0 0 0 1px #0a1526, inset 0 0 0 2px #e7eef8, 2px 3px 12px 3px rgba(0, 0, 0, .65); background: linear-gradient(#7da0d4 0, #5f88c5 50px, #d5dce6 110px, #1f5fb5 112px, #1f5fb5); }
.dlg-title { display: flex; align-items: center; justify-content: space-between; height: 21px; margin: 2px -3px 0; padding: 1px 4px 0 5px; background: linear-gradient(90deg, #8cb0e0 0, #8cb0e0 110px, #2c68b8 150px, #3a72c0 210px, #6e97d0 300px, #5a88c8); }
.dlg-title h2 { line-height: 20px; }
.dlg-title button { width: 17px; height: 17px; border: 1px solid #571d1a; border-radius: 2px; background: linear-gradient(#e9a99c, #d57565 48%, #b93d28 52%, #d8694f); display: grid; place-items: center; box-shadow: inset 0 0 0 1px #efb9ad; }
.dlg-title svg { width: 10px; height: 10px; }
.dlg-body { border: 1px solid #000; outline: 1px solid #dfe8f4; background: #f0f0f0; margin-top: 1px; padding: 4px 6px 5px 4px; }
.tabs { display: flex; align-items: flex-end; padding-left: 2px; height: 23px; font-size: 12px; }
.tabs button { height: 20px; padding: 0 2px; border: 1px solid #898c95; border-bottom: 0; background: linear-gradient(#f4f4f4, #ececec 50%, #d8d8d8); line-height: 18px; }
.tabs .active { height: 24px; background: #fff; margin: 0 -1px -1px; padding: 0 2px; z-index: 1; font-weight: 700; line-height: 16px; }
.tabs .active span { display: block; outline: 1px dotted #000; padding: 0 1px; margin-bottom: 3px; }
.pane { border: 1px solid #898c95; background: #fff; padding: 7px 8px 39px 5px; display: flex; flex-direction: column; gap: 2px; min-height: 321px; }
.prop { display: grid; grid-template-columns: 139px minmax(0, 182px) 24px; height: 23px; }
.prop label { line-height: 26px; height: 23px; white-space: nowrap; }
.prop > input { border: 1px solid #abadb3; min-width: 0; padding: 0 2px; }
.combo { display: grid; border: 1px solid #898c95; }
.combo > * { grid-area: 1 / 1; }
.combo select { appearance: none; border: 0; background: #fff; padding: 0 20px 0 1px; outline: 0; border-radius: 0; }
.combo i { justify-self: end; width: 17px; pointer-events: none; display: grid; place-items: center; border: 1px solid #6f7175; background: linear-gradient(#f6f6f6, #ddd 60%, #c9c9c9); box-shadow: inset 0 0 0 1px #fff; }
.combo i::after { content: ""; border: 4px solid transparent; border-top-color: #000; border-bottom: 0; }
.prop button { width: 19px; height: 19px; margin: 1px 0 0 5px; border: 1px solid #707070; border-radius: 3px; background: linear-gradient(#f4f4f4, #e6e6e6 50%, #d2d2d2); box-shadow: inset 0 0 0 1px #fafafa; line-height: 17px; }
.prop button:disabled { border-color: #adb2b5; background: #f4f4f4; color: #838383; }
```
